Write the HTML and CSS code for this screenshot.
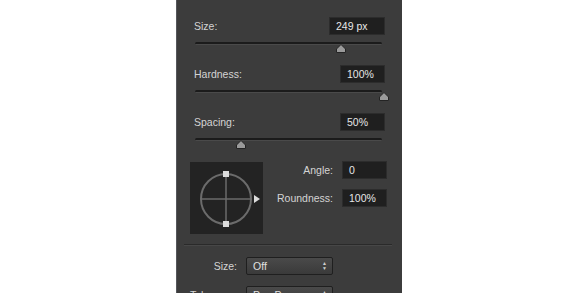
FILE: index.html
```html
<!DOCTYPE html>
<html lang="en">
<head>
	<meta charset="UTF-8">
	<meta name="viewport" content="width=device-width, initial-scale=1.0">
	<title>Brush Tip Shape</title>
	<link rel="stylesheet" href="styles.css">
</head>
<body>
	<div class="panel">
		<div class="setting first">
			<div class="row">
				<span class="label">Size:</span>
				<div class="value wide">249 px</div>
			</div>
			<div class="slider">
				<div class="track"></div>
				<svg class="thumb" style="left: 146px" width="10" height="9" viewBox="0 0 10 9"><polygon points="5,0.5 9.5,5 9.5,8.5 0.5,8.5 0.5,5" /></svg>
			</div>
		</div>
		<div class="setting">
			<div class="row">
				<span class="label">Hardness:</span>
				<div class="value">100%</div>
			</div>
			<div class="slider">
				<div class="track"></div>
				<svg class="thumb" style="left: 189px" width="10" height="9" viewBox="0 0 10 9"><polygon points="5,0.5 9.5,5 9.5,8.5 0.5,8.5 0.5,5" /></svg>
			</div>
		</div>
		<div class="setting">
			<div class="row">
				<span class="label">Spacing:</span>
				<div class="value">50%</div>
			</div>
			<div class="slider">
				<div class="track"></div>
				<svg class="thumb" style="left: 46px" width="10" height="9" viewBox="0 0 10 9"><polygon points="5,0.5 9.5,5 9.5,8.5 0.5,8.5 0.5,5" /></svg>
			</div>
		</div>
		<div class="angle-section">
			<div class="preview">
				<svg width="73" height="72" viewBox="0 0 73 72">
					<circle cx="36" cy="37" r="25" fill="none" stroke="#6b6b6b" stroke-width="2" />
					<line x1="11" y1="37" x2="61" y2="37" stroke="#6b6b6b" stroke-width="1.5" />
					<line x1="36" y1="12" x2="36" y2="62" stroke="#6b6b6b" stroke-width="1.5" />
					<rect x="33" y="9" width="6" height="6" fill="#dcdcdc" />
					<rect x="33" y="59" width="6" height="6" fill="#dcdcdc" />
					<polygon points="64,33 70,37 64,41" fill="#dcdcdc" />
				</svg>
			</div>
			<div class="angle-fields">
				<div class="field">
					<span class="label">Angle:</span>
					<div class="value">0</div>
				</div>
				<div class="field">
					<span class="label">Roundness:</span>
					<div class="value">100%</div>
				</div>
			</div>
		</div>
		<div class="divider"></div>
		<div class="control">
			<span class="label">Size:</span>
			<div class="select">Off<span class="arrows">&#9650;<br>&#9660;</span></div>
		</div>
		<div class="control">
			<span class="label">Tolerance:</span>
			<div class="select">Pen Pressure<span class="arrows">&#9650;<br>&#9660;</span></div>
			<span class="pen">&#9650;</span>
		</div>
	</div>
</body>
</html>
```

FILE: styles.css
```css
html, body {
	margin: 0;
	height: 293px;
	overflow: hidden;
	background-color: #fff;
}

body {
	font-family: "Liberation Sans", Arial, sans-serif;
	font-size: 10.5px;
	color: #d4d4d4;
}

.panel {
	margin-left: 176px;
	width: 226px;
	height: 320px;
	box-sizing: border-box;
	background-color: #3c3c3c;
	border-left: 1px solid #55575c;
	padding: 17px 17px 0 13px;
}

.setting {
	margin-top: 13px;
}

.setting.first {
	margin-top: 0;
}

.row {
	display: flex;
	justify-content: space-between;
	align-items: center;
	padding-left: 4px;
	height: 18px;
}

.value {
	width: 45px;
	height: 18px;
	box-sizing: border-box;
	background-color: #1f1f1f;
	border: 1px solid #2c2c2c;
	padding-left: 6px;
	line-height: 16px;
	color: #e6e6e6;
}

.value.wide {
	width: 56px;
}

.slider {
	position: relative;
	margin: 7px 3px 0 5px;
	height: 10px;
}

.track {
	height: 2px;
	background-color: #1b1b1b;
	border-bottom: 1px solid #4a4a4a;
	border-radius: 2px;
}

.thumb {
	position: absolute;
	top: 2px;
	margin-left: -5px;
}

.thumb polygon {
	fill: #9a9a9a;
	stroke: #242424;
	stroke-width: 1;
}

.angle-section {
	display: flex;
	justify-content: space-between;
	margin-top: 13px;
}

.preview {
	margin-top: 1px;
	width: 73px;
	height: 72px;
	background-color: #232323;
}

.preview svg {
	display: block;
}

.angle-fields {
	display: flex;
	flex-direction: column;
	gap: 10px;
	margin-right: -2px;
}

.field {
	display: flex;
	justify-content: flex-end;
	align-items: center;
	gap: 9px;
}

.divider {
	margin: 10px -7px 0 -6px;
	border-top: 1px solid #2a2a2a;
	border-bottom: 1px solid #474747;
}

.control {
	display: flex;
	align-items: center;
	gap: 9px;
	margin-top: 11px;
}

.control .label {
	width: 47px;
	text-align: right;
}

.select {
	position: relative;
	width: 87px;
	height: 18px;
	box-sizing: border-box;
	border: 1px solid #1f1f1f;
	border-radius: 2px;
	background: linear-gradient(#4a4a4a, #3a3a3a);
	padding-left: 6px;
	line-height: 16px;
	color: #e0e0e0;
}

.arrows {
	position: absolute;
	right: 5px;
	top: 3px;
	font-size: 5px;
	line-height: 5px;
	color: #cfcfcf;
}

.pen {
	font-size: 8px;
	color: #cfcfcf;
}
```
